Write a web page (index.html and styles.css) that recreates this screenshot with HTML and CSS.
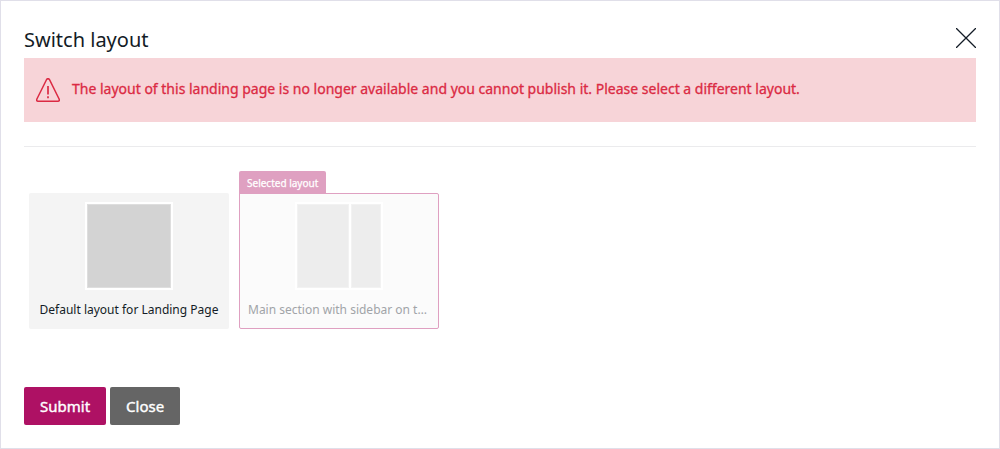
FILE: index.html
```html
<!DOCTYPE html>
<html lang="en">
<head>
<meta charset="utf-8">
<title>Switch layout</title>
<link rel="stylesheet" href="styles.css">
</head>
<body>
<main class="modal">
  <header class="header">
    <h1 class="title">Switch layout</h1>
    <button class="dismiss" aria-label="Close dialog"><svg width="20" height="20" viewBox="0 0 20 20"><path d="M0 0 20 20M20 0 0 20"/></svg></button>
  </header>
  <div class="alert">
    <svg class="alert-icon" width="24" height="24" viewBox="0 0 24 24"><path d="M10.600 1.500 .9 21Q.1 23.200 2 23.200H22Q23.900 23.200 23.100 21L13.400 1.500Q12 -.2 10.600 1.500Z"/><path class="mark" d="M12 8V16.500M12 18.300V20.200"/></svg>
    <p class="alert-text">The layout of this landing page is no longer available and you cannot publish it. Please select a different layout.</p>
  </div>
  <section class="layouts">
    <div class="card">
      <div class="thumb"><span class="zone"></span></div>
      <div class="name">Default layout for Landing Page</div>
    </div>
    <div class="card selected">
      <span class="tag">Selected layout</span>
      <div class="thumb"><span class="zone zone-main"></span><span class="zone"></span></div>
      <div class="name">Main section with sidebar on t…</div>
    </div>
  </section>
  <footer class="actions"><button class="btn primary">Submit</button><button class="btn">Close</button></footer>
</main>
</body>
</html>
```
FILE: styles.css
```css
* { box-sizing: border-box; }
body { margin: 0; font-family: "Noto Sans", sans-serif; color: #131c26; }
button { border: 0; font: inherit; }
.modal { height: 449px; border: 1px solid #e0dfe9; padding: 23px; background: #fff; }
.header { height: 34px; display: flex; justify-content: space-between; }
.title { margin: 1px 0 0; font-size: 20px; line-height: 30px; font-weight: 400; }
.dismiss { width: 20px; height: 20px; padding: 0; margin-top: 4px; background: none; }
.dismiss svg { display: block; fill: none; stroke: #131c26; stroke-width: 1.3; }
.alert { height: 64px; display: flex; align-items: center; padding: 0 12px; gap: 12px; background: #f7d4d8; color: #db2a43; }
.alert-icon { fill: none; stroke: currentColor; stroke-width: 1.5; }
.mark { stroke-width: 1.7; }
.alert-text { margin: 0 0 2px; font-size: 14px; line-height: 20px; font-weight: 400; -webkit-text-stroke: .3px; }
.layouts { display: flex; gap: 10px; margin-top: 24px; padding: 46px 5px 0; border-top: 1px solid #ebebed; }
.card { position: relative; width: 200px; height: 136px; padding: 9px 10px 0; border-radius: 2px; background: #f4f4f4; }
.thumb { display: flex; gap: 2px; width: 88px; height: 88px; margin: 0 auto; padding: 2px; background: #fff; }
.zone { flex: 1; border: 1px solid #dedede; background: #d3d3d3; }
.zone-main { flex: 0 0 52px; }
.name { margin-top: 11px; font-size: 12px; line-height: 18px; text-align: center; white-space: nowrap; }
.selected { padding: 8px 8px 0; border: 1px solid #dfa0c1; background: #fbfbfb; border-radius: 0 2px 2px 2px; }
.selected .zone { border-color: #f2f2f2; background: #ededed; }
.selected .name { text-align: left; color: #a1a4a8; }
.tag { position: absolute; left: -1px; top: -23px; height: 23px; padding: 0 8px; border-radius: 2px 2px 0 0; background: #dfa0c1; color: #fff; font-size: 10px; line-height: 24px; -webkit-text-stroke: .25px; }
.actions { display: flex; gap: 4px; margin-top: 58px; }
.btn { height: 38px; padding: 0 16px; border-radius: 2px; background: #656565; color: #fff; font-size: 15px; line-height: 38px; -webkit-text-stroke: .4px; }
.primary { background: #ae1164; }
```
